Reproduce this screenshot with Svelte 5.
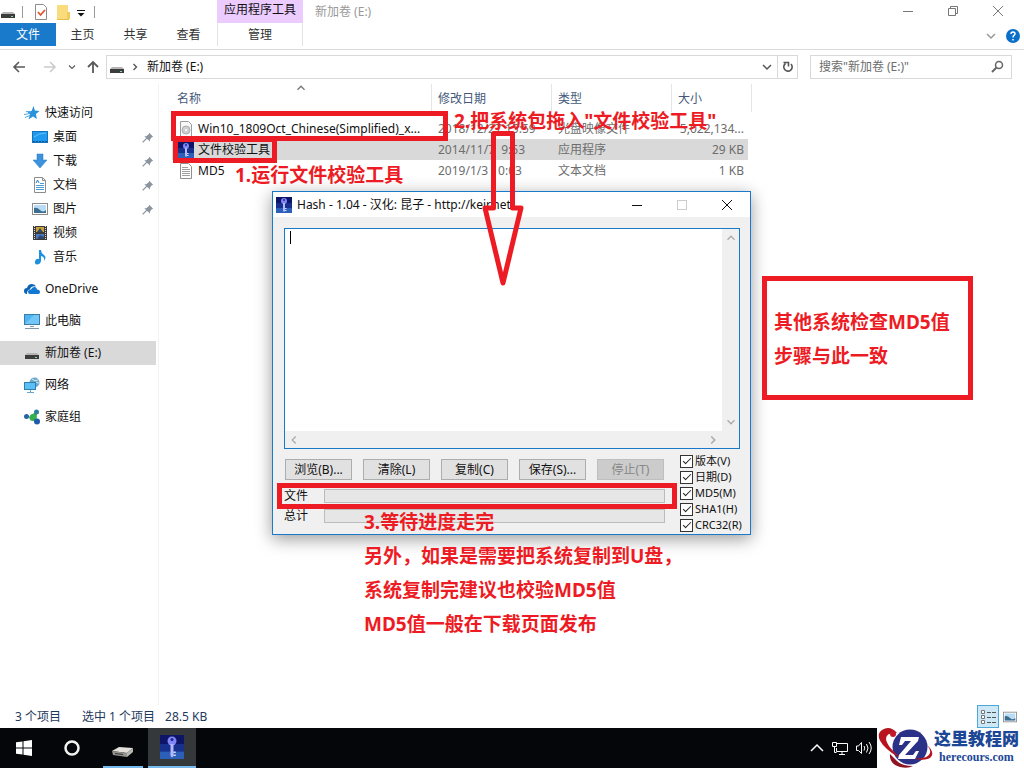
<script lang="ts">
  type Place = { icon: string; label: string; child?: boolean; pinned?: boolean };

  const places: Place[][] = [
    [
      { icon: 'star', label: '快速访问' },
      { icon: 'desktop', label: '桌面', child: true, pinned: true },
      { icon: 'download', label: '下载', child: true, pinned: true },
      { icon: 'document', label: '文档', child: true, pinned: true },
      { icon: 'picture', label: '图片', child: true, pinned: true },
      { icon: 'video', label: '视频', child: true },
      { icon: 'music', label: '音乐', child: true }
    ],
    [{ icon: 'cloud', label: 'OneDrive' }],
    [{ icon: 'pc', label: '此电脑' }],
    [{ icon: 'drive', label: '新加卷 (E:)' }],
    [{ icon: 'network', label: '网络' }],
    [{ icon: 'homegroup', label: '家庭组' }]
  ];

  const files = [
    { icon: 'iso', name: 'Win10_1809Oct_Chinese(Simplified)_x...', date: '2018/12/27 15:59', type: '光盘映像文件', size: '5,022,134...' },
    { icon: 'key', name: '文件校验工具', date: '2014/11/7 \u00a09:53', type: '应用程序', size: '29 KB' },
    { icon: 'text', name: 'MD5', date: '2019/1/3 10:03', type: '文本文档', size: '1 KB' }
  ];

  const actions = ['浏览(B)...', '清除(L)', '复制(C)', '保存(S)...', '停止(T)'];

  let currentPlace = $state('新加卷 (E:)');
  let selectedFile = $state('文件校验工具');
  let output = $state('');
  let checks = $state([
    { label: '版本(V)', on: true },
    { label: '日期(D)', on: true },
    { label: 'MD5(M)', on: true },
    { label: 'SHA1(H)', on: true },
    { label: 'CRC32(R)', on: true }
  ]);
</script>

{#snippet icon(name: string)}
  <svg class="icon" viewBox="0 0 16 16" aria-hidden="true">
    {#if name === 'star'}
      <path d="M9.500 1l1.400 4.600 4.600.4-3.600 3 1 5-3.900-2.500L4.500 14.500l1.500-5L3 6.500l4.600-.5z" fill="#2a93dc" />
      <path d="M0 9.500l6-1M1 12.500l5-2M2 6.500l5 .5" stroke="#4fa9e6" />
    {:else if name === 'desktop'}
      <rect x="0.500" y="2.500" width="15" height="11" fill="#1e9bf0" stroke="#1673bd" />
      <path d="M2 8Q7 4 14 4" stroke="#67c1fa" fill="none" />
      <path d="M1 12.500h14" stroke="#0b5798" stroke-dasharray="2 1" />
    {:else if name === 'download'}
      <path d="M5 1h6v6h4l-7 8-7-8h4z" fill="#3b93dd" stroke="#2878bd" stroke-width="0.500" />
    {:else if name === 'document'}
      <path d="M2.500 .5h8l3 3v12h-11z" fill="#fff" stroke="#8c8c8c" />
      <path d="M10.500 .5v3h3" fill="none" stroke="#8c8c8c" />
      <path d="M4 8.500h8M4 10.500h8M4 12.500h8M8 6.500h4" stroke="#4d9bd6" />
      <path d="M4 6l1.500-3L7 6" fill="none" stroke="#2c7bbd" />
    {:else if name === 'picture'}
      <rect x="0.500" y="2.500" width="15" height="11" fill="#fff" stroke="#8c8c8c" />
      <rect x="2" y="4" width="12" height="8" fill="#b8dcf5" />
      <path d="M2 7q3-1 6 2t6 0v3H2z" fill="#3d6d8f" />
    {:else if name === 'video'}
      <rect x="1" y="1" width="14" height="14" fill="#3b3b3b" />
      <path d="M2.500 1v14M13.500 1v14" stroke="#ddd" stroke-dasharray="1 1" />
      <rect x="4" y="2" width="8" height="5" fill="#c9a33a" />
      <rect x="4" y="9" width="8" height="5" fill="#4c79c4" />
      <path d="M5 7l3-4 3 4zM5 14l3-4 4 2v2z" fill="#31486b" />
    {:else if name === 'music'}
      <path d="M7 1h2q0 3 3 5t0 6q1-4-3-5v5q-.5 3-3.500 3.500T3 12.500 7 10z" fill="#1e90e0" />
    {:else if name === 'cloud'}
      <path d="M0 10q0-3 3-3 1-4 5-4 3 0 4 2.500-5-1-6 3-3 0-3 4.500Q0 13 0 10z" fill="#0a63b5" />
      <path d="M4 11q0-2.500 3-2.500 1-3 4-2.500 2 .5 2 2.500 3 0 3 2.500T13.500 13H6q-2 0-2-2z" fill="#1378d0" />
    {:else if name === 'pc'}
      <rect x="0.500" y="1.500" width="15" height="10" fill="#4fb5f2" stroke="#3c7ca8" />
      <path d="M1 11L10 2h5v9z" fill="#8ad3fa" opacity="0.600" />
      <path d="M6 13.500h4M1 15.500h14" stroke="#7f98a8" />
    {:else if name === 'drive'}
      <path d="M3 8h10l2 2H1z" fill="#b5b5b5" />
      <rect x="1" y="10" width="14" height="4" fill="#3c3c3c" />
      <rect x="11" y="12" width="2" height="1" fill="#7fe0a0" />
    {:else if name === 'network'}
      <circle cx="10.500" cy="5.500" r="5" fill="#6fa9c9" />
      <path d="M8 2q3 3 6 1M10 8q2-4 5-2" stroke="#d5eaf4" fill="none" />
      <rect x="0.500" y="5.500" width="11" height="7" fill="#5bc0f5" stroke="#2f7fb3" />
      <path d="M3 15.500h7M6.500 13v2" stroke="#6aa4c4" />
    {:else if name === 'homegroup'}
      <path d="M10 4l3 1-1 7-6-2-1-2z" fill="#35b04a" />
      <circle cx="9" cy="8.500" r="3.500" fill="#35b04a" />
      <circle cx="2.500" cy="7.500" r="2.500" fill="#2464a4" />
      <circle cx="12.500" cy="3" r="2.500" fill="#2c7f9d" />
      <circle cx="13" cy="12.500" r="3" fill="#1e5ca8" />
    {:else if name === 'iso'}
      <path d="M2.500 .5h8l3 3v12h-11z" fill="#f8f8f8" stroke="#9a9a9a" />
      <circle cx="8" cy="9" r="4" fill="#ccd0d2" stroke="#adadad" />
      <circle cx="8" cy="9" r="1" fill="#fff" />
    {:else if name === 'text'}
      <path d="M2.500 .5h8l3 3v12h-11z" fill="#fff" stroke="#8f8f8f" />
      <path d="M4 4.500h6M4 6.500h8M4 8.500h8M4 10.500h8M4 12.500h8" stroke="#a0a0a0" />
    {:else if name === 'key'}
      <rect width="16" height="16" fill="#0c1568" />
      <rect y="6" width="16" height="5" fill="#17308e" />
      <rect y="11" width="16" height="5" fill="#2c60b8" />
      <circle cx="8" cy="4" r="3" fill="#8086f4" />
      <circle cx="8" cy="3" r="1" fill="#1c2590" />
      <path d="M7 6h2v8l-1 1-1-1z" fill="#b4b9ff" />
      <path d="M9 11.500h1.500M9 13.500h1.500" stroke="#d5d8ff" />
    {:else if name === 'pin'}
      <path d="M10 2l5 5-1.500.5-2.500 3v2.500L4 6.500h2.500l3-2.500z" fill="#8b949e" />
      <path d="M7.500 8.500L2 14" stroke="#8b949e" stroke-width="1.500" />
    {:else if name === 'down'}
      <path d="M4 6l4 4 4-4" fill="none" stroke="currentColor" stroke-width="1.500" />
    {:else if name === 'up'}
      <path d="M4 10l4-4 4 4" fill="none" stroke="currentColor" stroke-width="1.500" />
    {:else if name === 'left'}
      <path d="M10 4L6 8l4 4" fill="none" stroke="currentColor" stroke-width="1.500" />
    {:else if name === 'right'}
      <path d="M6 4l4 4-4 4" fill="none" stroke="currentColor" stroke-width="1.800" />
    {:else if name === 'back'}
      <path d="M14 8H3M8 3L3 8l5 5" fill="none" stroke="currentColor" stroke-width="1.600" />
    {:else if name === 'forward'}
      <path d="M2 8h11M8 3l5 5-5 5" fill="none" stroke="currentColor" stroke-width="1.600" />
    {:else if name === 'parent'}
      <path d="M8 14V3M3 8l5-5 5 5" fill="none" stroke="currentColor" stroke-width="1.800" />
    {:else if name === 'refresh'}
      <path d="M11 5a4.200 4.200 0 1 1-5.500-.5M3.500 3.500h5v4" fill="none" stroke="currentColor" stroke-width="1.600" />
    {:else if name === 'search'}
      <circle cx="10" cy="6" r="3.500" fill="none" stroke="currentColor" stroke-width="1.500" />
      <path d="M7.500 8.500L3 13" stroke="currentColor" stroke-width="2" />
    {:else if name === 'min'}
      <path d="M3 8.500h10" stroke="currentColor" />
    {:else if name === 'restore'}
      <path d="M3.500 5.500h7v7h-7zM5.500 5.500v-2h7v7h-2" fill="none" stroke="currentColor" />
    {:else if name === 'max'}
      <rect x="3.500" y="3.500" width="9" height="9" fill="none" stroke="currentColor" />
    {:else if name === 'close'}
      <path d="M3 3l10 10M13 3L3 13" stroke="currentColor" />
    {:else if name === 'check'}
      <path d="M2.500 .5h8l3 3v12h-11z" fill="#fff" stroke="#8c8c8c" />
      <path d="M5 8l2.500 3L12 6" fill="none" stroke="#e2562f" stroke-width="1.800" />
    {:else if name === 'folder'}
      <path d="M2 1h11v14H2z" fill="#fbdc7c" />
      <path d="M12 8h3v7h-3z" fill="#f3cb59" />
      <path d="M2 15.500h12" stroke="#e7bd4a" />
    {:else if name === 'menu'}
      <path d="M4 6.500h8" stroke="#111" />
      <path d="M4.500 9h7L8 12.500z" fill="#111" />
    {:else if name === 'help'}
      <circle cx="8" cy="8" r="7" fill="#0a6fc8" />
      <path d="M6 6q0-2 2-2t2 1.800q0 1-1 1.500T8 9.500M8 11v1.500" fill="none" stroke="#fff" stroke-width="1.500" />
    {/if}
  </svg>
{/snippet}

<div class="screen">
  <div class="explorer">
    <header class="ribbon">
      <div class="quick">
        {@render icon('drive')}
        <span class="bar"></span>
        <button aria-label="属性">{@render icon('check')}</button>
        <button aria-label="新建文件夹">{@render icon('folder')}</button>
        <button class="more" aria-label="自定义">{@render icon('menu')}</button>
        <span class="bar"></span>
      </div>
      <div class="context-title">应用程序工具</div>
      <div class="title">
        <span>新加卷 (E:)</span>
        <div class="window-controls">
          <button aria-label="最小化">{@render icon('min')}</button>
          <button aria-label="还原">{@render icon('restore')}</button>
          <button aria-label="关闭">{@render icon('close')}</button>
        </div>
      </div>
      <nav class="tabs">
        <button class="file-tab">文件</button>
        <button>主页</button>
        <button>共享</button>
        <button>查看</button>
      </nav>
      <button class="context-tab">管理</button>
      <div class="ribbon-end">
        {@render icon('down')}
        <button aria-label="帮助">{@render icon('help')}</button>
      </div>
    </header>

    <div class="address-row">
      <div class="nav-buttons">
        <button aria-label="后退">{@render icon('back')}</button>
        <button class="off" aria-label="前进">{@render icon('forward')}</button>
        <button class="small" aria-label="最近">{@render icon('down')}</button>
        <button aria-label="上移">{@render icon('parent')}</button>
      </div>
      <div class="address">
        {@render icon('drive')}
        <span class="chevron">{@render icon('right')}</span>
        <span class="path">新加卷 (E:)</span>
        <button aria-label="历史">{@render icon('down')}</button>
        <button class="refresh" aria-label="刷新">{@render icon('refresh')}</button>
      </div>
      <div class="search">
        <input type="text" aria-label="搜索" placeholder={'搜索"新加卷 (E:)"'} />
        {@render icon('search')}
      </div>
    </div>

    <div class="body">
      <nav class="sidebar">
        {#each places as group}
          <div class="group">
            {#each group as place}
              <button
                class="place"
                class:child={place.child}
                class:current={place.label === currentPlace}
                onclick={() => currentPlace = place.label}
              >
                {@render icon(place.icon)}
                <span>{place.label}</span>
                {#if place.pinned}
                  <span class="pin">{@render icon('pin')}</span>
                {/if}
              </button>
            {/each}
          </div>
        {/each}
      </nav>

      <main class="files">
        <table>
          <thead>
            <tr>
              <th class="name"><div class="head">名称<span class="sort">{@render icon('up')}</span></div></th>
              <th class="date"><div class="head">修改日期</div></th>
              <th class="type"><div class="head">类型</div></th>
              <th class="size"><div class="head">大小</div></th>
            </tr>
          </thead>
          <tbody>
            {#each files as file}
              <tr class:selected={file.name === selectedFile} onclick={() => selectedFile = file.name}>
                <td class="file-name"><div class="cell">{@render icon(file.icon)}<span>{file.name}</span></div></td>
                <td>{file.date}</td>
                <td>{file.type}</td>
                <td class="right">{file.size}</td>
              </tr>
            {/each}
          </tbody>
        </table>
      </main>
    </div>

    <footer class="status">
      <span>3 个项目</span>
      <span>选中 1 个项目</span>
      <span class="bytes">28.5 KB</span>
      <div class="views">
        <button class="active" aria-label="详细信息">
          <svg width="18" height="18" viewBox="0 0 18 18">
            <path d="M2.500 2.500h3v3h-3zM2.500 7.500h3v3h-3zM2.500 12.500h3v3h-3z" fill="#fff" stroke="#777" />
            <path d="M8 4.500h9M8 9.500h9M8 14.500h9" stroke="#555" stroke-dasharray="4 1" />
          </svg>
        </button>
        <button aria-label="大图标">{@render icon('picture')}</button>
      </div>
    </footer>
  </div>

  <section class="dialog">
    <div class="dialog-title">
      {@render icon('key')}
      <span>Hash - 1.04 - 汉化: 昆子 - http://keir.net</span>
      <div class="window-controls">
        <button aria-label="最小化">{@render icon('min')}</button>
        <button class="off" aria-label="最大化" disabled>{@render icon('max')}</button>
        <button aria-label="关闭">{@render icon('close')}</button>
      </div>
    </div>
    <div class="dialog-body">
      <div class="editor">
        <textarea aria-label="结果" bind:value={output}></textarea>
        <span class="caret"></span>
        <div class="vbar">{@render icon('up')}{@render icon('down')}</div>
        <div class="hbar">{@render icon('left')}{@render icon('right')}</div>
      </div>
      <div class="controls">
        <div class="left">
          <div class="actions">
            {#each actions as action, i}
              <button disabled={i === 4}>{action}</button>
            {/each}
          </div>
          <div class="progress-row"><span id="file-label">文件</span><div class="progress" role="progressbar" aria-labelledby="file-label" aria-valuenow="0"></div></div>
          <div class="progress-row"><span id="total-label">总计</span><div class="progress" role="progressbar" aria-labelledby="total-label" aria-valuenow="0"></div></div>
        </div>
        <div class="checks">
          {#each checks as check}
            <label><input type="checkbox" bind:checked={check.on} />{check.label}</label>
          {/each}
        </div>
      </div>
    </div>
  </section>

  <!-- red notes on top of the windows -->
  <div class="frame frame-iso"></div>
  <div class="frame frame-tool"></div>
  <div class="frame frame-progress"></div>
  <p class="note note-run">1.运行文件校验工具</p>
  <p class="note note-drag">2.把系统包拖入"文件校验工具"</p>
  <svg class="arrow" width="46" height="160" viewBox="0 0 46 160" aria-hidden="true">
    <path d="M13.500 5.500h19V80H41L23 155 5 80h8.500z" fill="none" stroke="#ed1c24" stroke-width="5" stroke-linejoin="round" />
  </svg>
  <div class="note note-steps">
    3.等待进度走完<br />
    另外，如果是需要把系统复制到U盘，<br />
    系统复制完建议也校验MD5值<br />
    MD5值一般在下载页面发布
  </div>
  <div class="note frame note-other">其他系统检查MD5值<br />步骤与此一致</div>

  <footer class="taskbar">
    <button class="task" aria-label="开始">
      <svg width="16" height="16" viewBox="0 0 16 16"><path d="M0 2.300L6.500 1.400v6.100H0zM7.500 1.200L16 0v7.500H7.500zM0 8.500h6.500v6.100L0 13.700zM7.500 8.500H16V16l-8.500-1.200z" fill="#fff" /></svg>
    </button>
    <button class="task" aria-label="Cortana">
      <svg width="16" height="16" viewBox="0 0 16 16"><circle cx="8" cy="8" r="6.500" fill="none" stroke="#f2f2f2" stroke-width="2.500" /></svg>
    </button>
    <button class="task open" aria-label="新加卷">
      <svg width="24" height="24" viewBox="0 0 24 24">
        <path d="M1 16l7-4 14 1-6 5z" fill="#e3e0dc" />
        <path d="M1 16l15 2v4L2 20z" fill="#96938f" />
        <path d="M16 18l6-5v4l-6 5z" fill="#bab6b2" />
        <path d="M4 18.500l8 1" stroke="#333" />
      </svg>
    </button>
    <button class="task focused" aria-label="Hash">{@render icon('key')}</button>
    <div class="tray">
      <svg width="16" height="16" viewBox="0 0 16 16" fill="none" stroke="#fff"><path d="M2 11l6-6 6 6" stroke-width="1.500" /></svg>
      <svg width="18" height="16" viewBox="0 0 18 16" fill="none" stroke="#fff"><path d="M6 3.500h10.500v8H5.500V8M8 14.500h6M11 12v2M1.500 2.500h4v4h-4zM3.500 7v5.500h2" /></svg>
      <svg width="18" height="16" viewBox="0 0 18 16" fill="none" stroke="#fff"><path d="M1.500 6v4.500h2l3 3v-11l-3 3.500zM9 6q1.500 2 0 4.500M11.500 4q3 4 0 8.500M14 2q4.500 6 0 12" /></svg>
    </div>
    <div class="brand">
      <svg width="56" height="40" viewBox="0 0 56 40" aria-hidden="true">
        <circle cx="33" cy="19" r="17.500" fill="#2a3187" />
        <path d="M20 5Q13-3 5 2-2 7 6 17q7 8 19 14Q10 19 9 11 9 4 20 5z" fill="#b71420" />
        <path d="M13 26q-1 10 10 13 8 2 13-1-11 0-16-5z" fill="#8e1522" />
        <path d="M50 17q4 5 3 8-2 7-19 5 15 4 20-1 4-5-4-12z" fill="#b71420" />
        <circle cx="16" cy="6" r="3" fill="#c31c28" />
        <path d="M24 9h18l-1 4-13 14h8l3-4h3l-4 8H21l1-4L34 13h-6l-3 4h-3z" fill="#fff" />
      </svg>
      <div class="brand-text">
        <strong>这里教程网</strong>
        <span>herecours.com</span>
      </div>
    </div>
  </footer>
</div>

<style>
  :global(body) {
    margin: 0;
  }

  .screen {
    position: relative;
    min-height: 100vh;
    display: flex;
    flex-direction: column;
    overflow: hidden;
    background: #fff;
    color: #111;
    font-family: "Noto Sans", "Noto Sans CJK SC", sans-serif;
    font-size: 12px;
    line-height: 16px;
  }

  button, input, textarea {
    font: inherit;
    color: inherit;
  }

  button {
    display: flex;
    align-items: center;
    justify-content: center;
    background: none;
    border: none;
    padding: 0;
  }

  .icon {
    display: block;
    flex: none;
    width: 16px;
    height: 16px;
  }

  .explorer {
    flex: 1;
    display: flex;
    flex-direction: column;
  }

  /* ribbon */
  .ribbon {
    display: grid;
    grid-template-columns: 217px 86px 1fr;
    grid-template-rows: 23px 26px;
    border-bottom: 1px solid #dadbdc;
  }

  .quick {
    display: flex;
    align-items: center;
    gap: 6px;
  }

  .quick .bar {
    width: 1px;
    height: 12px;
    background: #999;
  }

  .quick .bar + button {
    margin-left: 4px;
  }

  .quick .more {
    width: 14px;
    margin-left: -3px;
  }

  .context-title {
    display: flex;
    justify-content: center;
    padding-top: 2px;
    background: #eccbff;
  }

  .title {
    display: flex;
    justify-content: space-between;
    align-items: center;
    padding-left: 12px;
    color: #999;
  }

  .window-controls {
    display: flex;
  }

  .window-controls button {
    width: 45px;
    color: #777;
  }

  .title .window-controls {
    padding: 0 4px 2px 0;
  }

  .tabs {
    display: flex;
    height: 23px;
  }

  .tabs button {
    width: 53px;
    color: #333;
  }

  .tabs .file-tab {
    width: 56px;
    background: #1979ca;
    color: #fff;
  }

  .context-tab {
    height: 23px;
    border-left: 1px solid #e3e3e3;
    border-right: 1px solid #e3e3e3;
    color: #333;
  }

  .ribbon-end {
    display: flex;
    align-items: center;
    justify-content: flex-end;
    gap: 6px;
    padding-right: 3px;
    color: #999;
  }

  /* address bar */
  .address-row {
    display: flex;
    align-items: center;
    height: 34px;
    padding-right: 12px;
  }

  .nav-buttons {
    display: flex;
    justify-content: space-between;
    width: 90px;
    padding: 0 5px 0 11px;
    color: #5a5a5a;
  }

  .nav-buttons .off {
    margin-left: 8px;
    color: #ccc;
  }

  .nav-buttons .small .icon,
  .chevron .icon {
    width: 12px;
    height: 12px;
  }

  .address {
    flex: 1;
    display: flex;
    align-items: center;
    height: 22px;
    padding-left: 2px;
    border: 1px solid #d9d9d9;
    color: #555;
  }

  .chevron {
    margin: 0 6px 0 4px;
  }

  .path {
    flex: 1;
    color: #111;
  }

  .address .refresh {
    width: 20px;
    height: 22px;
    margin-left: 2px;
    border-left: 1px solid #d9d9d9;
  }

  .search {
    display: flex;
    align-items: center;
    box-sizing: border-box;
    width: 202px;
    height: 24px;
    margin-left: 12px;
    padding: 0 6px 0 8px;
    border: 1px solid #d9d9d9;
    color: #666;
  }

  .search input {
    flex: 1;
    min-width: 0;
    padding: 0;
    border: none;
    outline: none;
  }

  .search input::placeholder {
    color: #6d6d6d;
  }

  /* sidebar */
  .body {
    flex: 1;
    display: flex;
  }

  .sidebar {
    width: 158px;
    padding-top: 17px;
    border-right: 1px solid #f2f2f2;
  }

  .group {
    margin-bottom: 8px;
  }

  .place {
    width: 156px;
    height: 24px;
    justify-content: flex-start;
    gap: 5px;
    padding-left: 24px;
  }

  .place.child {
    padding-left: 32px;
  }

  .place.current {
    background: #d9d9d9;
  }

  .pin {
    margin-left: auto;
    padding-right: 2px;
  }

  .pin .icon {
    width: 13px;
    height: 13px;
  }

  /* file list */
  .files {
    flex: 1;
    padding-left: 13px;
  }

  table {
    width: 576px;
    table-layout: fixed;
    border-collapse: collapse;
  }

  th {
    height: 34px;
    padding: 0;
    vertical-align: top;
    text-align: left;
    font-weight: normal;
    color: #44597a;
  }

  .name {
    width: 260px;
  }

  .date, .type {
    width: 120px;
  }

  .head {
    position: relative;
    display: flex;
    align-items: center;
    box-sizing: border-box;
    height: 28px;
    padding: 2px 0 0 6px;
    border-right: 1px solid #e5e5e5;
  }

  .name .head {
    padding-left: 5px;
  }

  .size .head {
    margin-right: -4px;
  }

  .sort {
    position: absolute;
    left: 122px;
    top: -3px;
    color: #777;
  }

  .sort .icon {
    width: 14px;
    height: 14px;
  }

  td {
    height: 21px;
    padding: 0 6px;
    white-space: nowrap;
    color: #6d6d6d;
  }

  td.right {
    padding: 0 4px;
    text-align: right;
  }

  .file-name {
    color: #111;
  }

  .cell {
    display: flex;
    gap: 4px;
  }

  .selected {
    background: #d9d9d9;
  }

  /* status bar */
  .status {
    display: flex;
    align-items: center;
    gap: 21px;
    height: 23px;
    padding: 0 7px 0 15px;
    color: #1e395b;
  }

  .status .bytes {
    margin-left: -11px;
  }

  .views {
    display: flex;
    margin-left: auto;
    gap: 4px;
  }

  .views .icon {
    width: 14px;
  }

  .views .active {
    width: 22px;
    height: 23px;
    background: #cce8f7;
    border: 1px solid #4ba8d8;
  }

  /* hash dialog */
  .dialog {
    position: absolute;
    left: 272px;
    top: 191px;
    width: 477px;
    border: 1px solid #1979ca;
    background: #f0f0f0;
    box-shadow: 0 4px 16px rgba(0, 0, 0, 0.4);
  }

  .dialog-title {
    display: flex;
    align-items: center;
    height: 25px;
    gap: 5px;
    padding: 0 1px 0 3px;
    background: #fff;
  }

  .dialog-title .window-controls {
    margin-left: auto;
  }

  .dialog-title .window-controls button {
    color: #111;
  }

  .dialog-title .window-controls .off {
    color: #ccc;
  }

  .dialog-body {
    padding: 11px 6px 1px 11px;
  }

  .editor {
    position: relative;
    display: grid;
    grid-template-columns: 1fr 17px;
    grid-template-rows: 202px 17px;
    margin-right: 4px;
    border: 1px solid #1979ca;
    background: #fff;
  }

  textarea {
    resize: none;
    border: none;
    outline: none;
    padding: 2px 5px;
    overflow: hidden;
  }

  .caret {
    position: absolute;
    left: 5px;
    top: 2px;
    width: 1px;
    height: 13px;
    background: #000;
  }

  .vbar, .hbar {
    display: flex;
    align-items: center;
    justify-content: space-between;
    background: #f0f0f0;
    color: #aaa;
  }

  .vbar {
    flex-direction: column;
    padding: 2px 0;
  }

  .vbar .icon, .hbar .icon {
    width: 14px;
    height: 14px;
  }

  .hbar {
    grid-column: 1 / 3;
    padding: 0 19px 0 2px;
  }

  .controls {
    display: flex;
    justify-content: space-between;
    padding-top: 4px;
  }

  .left {
    width: 381px;
    padding-top: 6px;
  }

  .actions {
    display: flex;
    justify-content: space-between;
    padding: 0 1px;
    margin-bottom: 6px;
  }

  .actions button {
    width: 67px;
    height: 21px;
    border: 1px solid #adadad;
    background: #e1e1e1;
    color: #111;
  }

  .actions button:disabled {
    border-color: #bfbfbf;
    background: #ccc;
    color: #888;
  }

  .progress-row {
    display: flex;
    align-items: center;
    height: 20px;
    gap: 16px;
  }

  .progress {
    flex: 1;
    height: 12px;
    border: 1px solid #bcbcbc;
    background: #e6e6e6;
  }

  .checks {
    width: 64px;
  }

  .checks label {
    display: flex;
    align-items: center;
    gap: 2px;
    height: 16px;
    font-size: 11px;
    white-space: nowrap;
  }

  .checks input {
    appearance: none;
    flex: none;
    display: grid;
    place-items: center;
    box-sizing: border-box;
    width: 13px;
    height: 13px;
    margin: 0;
    border: 1px solid #333;
    background: #fff;
  }

  .checks input:checked::before {
    content: "";
    width: 7px;
    height: 3px;
    margin-bottom: 2px;
    border-left: 1px solid #222;
    border-bottom: 1px solid #222;
    rotate: -45deg;
  }

  /* notes */
  .frame {
    position: absolute;
    box-sizing: border-box;
    border: 5px solid #ed1c24;
  }

  .frame-iso {
    left: 171px;
    top: 111px;
    width: 277px;
    height: 30px;
  }

  .frame-tool {
    left: 173px;
    top: 137px;
    width: 104px;
    height: 26px;
  }

  .frame-progress {
    left: 277px;
    top: 483px;
    width: 400px;
    height: 26px;
  }

  .note {
    position: absolute;
    margin: 0;
    color: #ed1c24;
    font-size: 19px;
    font-weight: bold;
    line-height: 34px;
    white-space: nowrap;
  }

  .note-run {
    left: 235px;
    top: 158px;
  }

  .note-drag {
    left: 454px;
    top: 104px;
  }

  .note-steps {
    left: 364px;
    top: 505px;
  }

  .note-other {
    left: 762px;
    top: 276px;
    width: 211px;
    height: 124px;
    padding: 24px 7px;
  }

  .arrow {
    position: absolute;
    left: 480px;
    top: 128px;
  }

  /* taskbar */
  .taskbar {
    display: flex;
    height: 40px;
    background: #05060a;
    color: #fff;
  }

  .task {
    width: 48px;
  }

  .task.open {
    width: 40px;
    margin: 0 5px 0 7px;
    border-bottom: 2px solid #76b9ed;
  }

  .task.focused {
    background: #35383b;
    border-bottom: 2px solid #76b9ed;
  }

  .task.focused .icon {
    width: 24px;
    height: 24px;
  }

  .tray {
    display: flex;
    align-items: center;
    gap: 6px;
    margin-left: auto;
    padding-right: 4px;
  }

  .brand {
    display: flex;
    width: 147px;
    background: #fff;
  }

  .brand-text {
    display: flex;
    flex-direction: column;
    align-items: center;
    padding-left: 1px;
    color: #1b4796;
  }

  .brand-text strong {
    font-size: 17px;
    font-weight: 900;
    line-height: 22px;
  }

  .brand-text span {
    font-family: "Liberation Serif", serif;
    font-size: 12px;
    font-weight: bold;
    line-height: 14px;
  }
</style>
